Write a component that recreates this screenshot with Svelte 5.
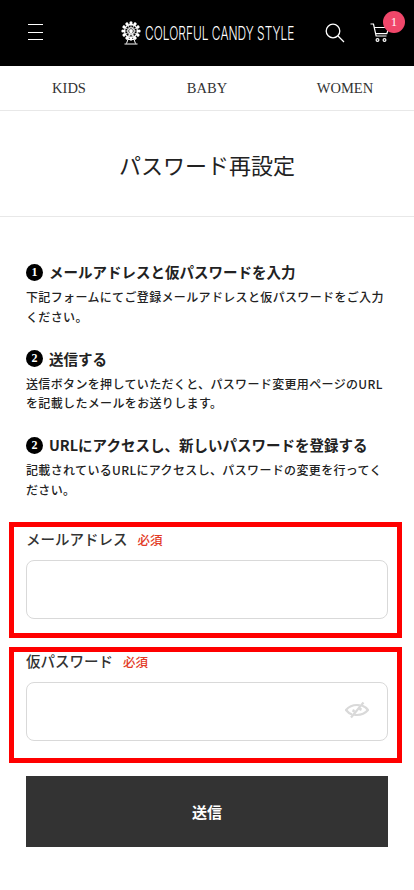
<script>
  const steps = [
    { n: 1, title: "メールアドレスと仮パスワードを入力", body: "下記フォームにてご登録メールアドレスと仮パスワードをご入力ください。" },
    { n: 2, title: "送信する", body: "送信ボタンを押していただくと、パスワード変更用ページのURLを記載したメールをお送りします。" },
    { n: 2, title: "URLにアクセスし、新しいパスワードを登録する", body: "記載されているURLにアクセスし、パスワードの変更を行ってください。" }
  ];
  const spokes = [0, 30, 60, 90, 120, 150, 180, 210, 240, 270, 300, 330];
</script>

<header class="top">
  <button class="burger" aria-label="menu">
    <span></span><span></span><span></span>
  </button>
  <a class="logo" href="#top">
    <svg width="22" height="24" viewBox="0 0 22 24" fill="none" stroke="#fff">
      <circle cx="11" cy="10" r="6.500" stroke-width="1.300" />
      <circle cx="11" cy="10" r="3.500" stroke-width="0.800" />
      <circle cx="11" cy="10" r="1.400" fill="#fff" stroke="none" />
      {#each spokes as a}
        <line x1="11" y1="10" x2="11" y2="3" stroke-width="0.700" transform="rotate({a} 11 10)" />
        <circle cx="11" cy="1.900" r="1.600" fill="#fff" stroke="none" transform="rotate({a} 11 10)" />
      {/each}
      <path d="M11 10 6.500 22.500M11 10 15.500 22.500M4.500 23h13M8 18.500h6" stroke-width="1" />
    </svg>
    <span>COLORFUL CANDY STYLE</span>
  </a>
  <button class="icon search" aria-label="search">
    <svg width="20" height="20" viewBox="0 0 20 20" fill="none" stroke="#fff" stroke-width="1.300">
      <circle cx="8" cy="8" r="6.800" />
      <path d="M13 13l6 6" />
    </svg>
  </button>
  <button class="icon cart" aria-label="cart">
    <svg width="20" height="20" viewBox="0 0 20 20" fill="none" stroke="#fff" stroke-width="1.200">
      <path d="M0.500 1h3l2.600 12h10.400M4.300 4.500h14.500l-2 6.200H5.600" />
      <circle cx="7.500" cy="17" r="1.400" />
      <circle cx="14.500" cy="17" r="1.400" />
    </svg>
    <span class="badge">1</span>
  </button>
</header>

<nav class="cats">
  <a href="#kids">KIDS</a>
  <a href="#baby">BABY</a>
  <a href="#women">WOMEN</a>
</nav>

<h1>パスワード再設定</h1>

<main>
  <section class="steps">
    {#each steps as s}
      <div class="step">
        <h2><span class="num">{s.n}</span>{s.title}</h2>
        <p>{s.body}</p>
      </div>
    {/each}
  </section>

  <form on:submit|preventDefault>
    <div class="field">
      <label for="mail">メールアドレス<em>必須</em></label>
      <input id="mail" type="email" />
    </div>
    <div class="field second">
      <label for="pw">仮パスワード<em>必須</em></label>
      <div class="pw">
        <input id="pw" type="password" />
        <svg class="eye" width="24" height="18" viewBox="0 0 24 18" fill="none" stroke="#d9d9d9" stroke-width="2.200">
          <path d="M7 13.500C4.500 12.500 2.500 11 1 9c3-3.500 6.500-5 11-5 1 0 1.800.1 2.800.3" />
          <path d="M17 4.500c2.500 1 4.500 2.500 6 4.500-3 3.500-6.500 5-11 5-1 0-1.800-.1-2.800-.3" />
          <path d="M6 16.500 18.500 1.500M9 8.500l-1 2.500M15 9.500l1-2.500" />
        </svg>
      </div>
    </div>
    <button class="send" type="submit">送信</button>
  </form>
</main>

<style>
  :global(body) {
    background: #fff;
    color: #222;
    font-family: "Noto Sans CJK JP", "Noto Sans", sans-serif;
  }

  button {
    background: none;
    border: 0;
    padding: 0;
    cursor: pointer;
  }

  .top {
    display: flex;
    align-items: center;
    height: 66px;
    background: #000;
    padding: 0 24px 0 28px;
    box-sizing: border-box;
  }
  .burger {
    display: flex;
    flex-direction: column;
    justify-content: space-between;
    width: 15px;
    height: 16px;
    margin: -2px 77px 0 0;
    span {
      display: block;
      height: 1px;
      background: #fff;
    }
  }
  .logo {
    display: flex;
    align-items: center;
    gap: 3px;
    color: #fff;
    text-decoration: none;
    font-family: Inter, sans-serif;
    font-size: 19px;
    font-weight: 300;
    white-space: nowrap;
    flex: 1;
    span {
      display: inline-block;
      width: 150px;
      transform-origin: left center;
      transform: scaleX(0.63);
    }
  }
  .icon {
    position: relative;
    width: 20px;
    height: 20px;
    svg { display: block; }
  }
  .search { margin-right: 25px; }
  .badge {
    position: absolute;
    top: -12px;
    left: 13px;
    width: 22px;
    height: 22px;
    border-radius: 50%;
    background: #f0476a;
    color: #fff;
    font: 12px/22px "Liberation Serif", serif;
    text-align: center;
  }

  .cats {
    display: grid;
    grid-template-columns: repeat(3, 1fr);
    height: 45px;
    box-sizing: border-box;
    border-bottom: 1px solid #e8e8e8;
    a {
      display: flex;
      align-items: center;
      justify-content: center;
      color: #333;
      text-decoration: none;
      font: 14.500px "Liberation Serif", serif;
    }
  }

  h1 {
    margin: 0;
    height: 105px;
    display: flex;
    align-items: center;
    justify-content: center;
    border-bottom: 1px solid #e8e8e8;
    font-size: 22px;
    font-weight: 400;
    color: #222;
  }

  main { padding: 0 26px; }

  .steps { padding-top: 43px; }
  .step {
    margin-bottom: 20.500px;
    h2 {
      display: flex;
      align-items: center;
      margin: 0 0 3px;
      font-size: 14.500px;
      line-height: 24px;
      font-weight: 700;
      color: #222;
    }
    p {
      margin: 0;
      font-size: 12px;
      letter-spacing: 0.350px;
      line-height: 19.500px;
      font-weight: 500;
      color: #222;
    }
  }
  .num {
    flex: none;
    width: 17px;
    height: 17px;
    margin-right: 6px;
    border-radius: 50%;
    background: #000;
    color: #fff;
    font: 700 12px/17px "Liberation Serif", serif;
    text-align: center;
  }

  form { padding-top: 2px; }

  .field {
    position: relative;
    padding-top: 7px;
    height: 116px;
    box-sizing: border-box;
    &::before {
      content: "";
      position: absolute;
      inset: 0 -14px 0 -17px;
      border: 5px solid #f00;
      pointer-events: none;
    }
    label {
      display: block;
      font-size: 14.500px;
      line-height: 20px;
      font-weight: 500;
      color: #333;
      margin-bottom: 10px;
    }
    em {
      font-style: normal;
      font-size: 12.500px;
      color: #e23a25;
      margin-left: 10px;
    }
    input {
      display: block;
      width: 100%;
      height: 59px;
      box-sizing: border-box;
      border: 1px solid #d9d9d9;
      border-radius: 8px;
      background: #fff;
      outline: none;
    }
  }
  .second {
    margin-top: 9px;
    padding-top: 4px;
    label { margin-bottom: 10px; }
  }
  .pw { position: relative; }
  .eye {
    position: absolute;
    right: 19px;
    top: 19px;
  }

  .send {
    display: block;
    width: 100%;
    height: 71px;
    margin-top: 13px;
    background: #333;
    color: #fff;
    font-family: inherit;
    font-size: 15px;
    font-weight: 700;
  }
</style>
